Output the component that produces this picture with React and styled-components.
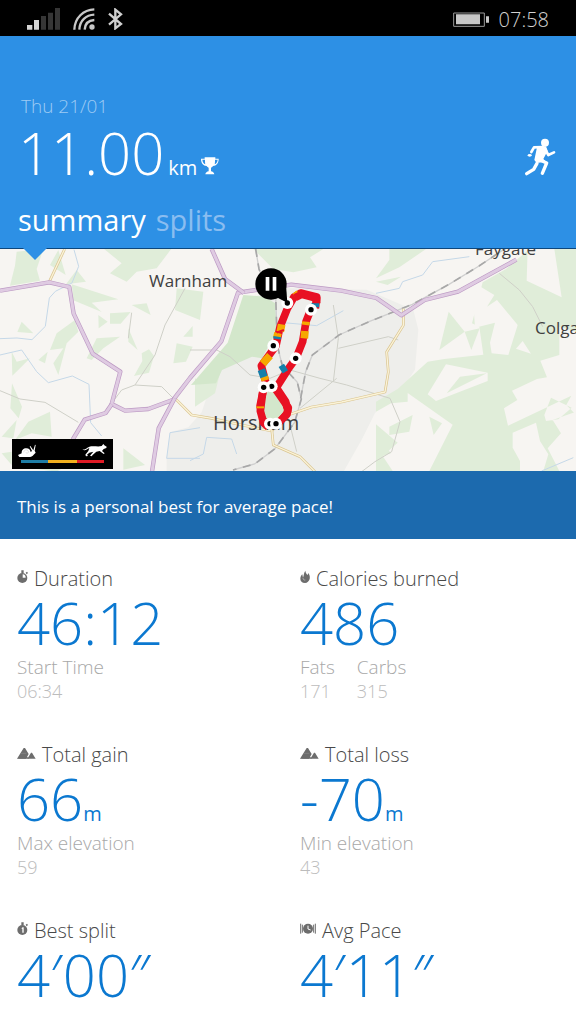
import React, { useState } from "react";
import styled, { createGlobalStyle } from "styled-components";

const GlobalStyle = createGlobalStyle`
  * { box-sizing: border-box; }
  body {
    margin: 0;
    background: #fff;
    font-family: "Open Sans", "Noto Sans", sans-serif;
    font-weight: 300;
  }
  button { font: inherit; border: 0; padding: 0; background: none; cursor: pointer; }
`;

const Page = styled.div`
  min-height: 100vh;
  background: #fff;
`;

const StatusBar = styled.div`
  display: flex;
  align-items: center;
  justify-content: space-between;
  height: 36px;
  padding: 2px 27px 0;
  background: #000;
  color: #d2d2d2;
  font-size: 20px;
`;

const StatusGroup = styled.div`
  display: flex;
  align-items: center;
  gap: ${(p) => p.$gap}px;
`;

const Icon = styled.svg`
  display: block;
  flex: none;
`;

const Header = styled.header`
  position: relative;
  display: flex;
  flex-direction: column;
  height: 213px;
  padding: 56px 20px 0 18px;
  background: #2d90e5;
  border-bottom: 1px solid #0d477d;
  color: #fff;
`;

const DateText = styled.div`
  padding-left: 3px;
  font-size: 19px;
  line-height: 28px;
  color: #9dcbf4;
`;

const DistanceRow = styled.div`
  display: flex;
  align-items: center;
  justify-content: space-between;
  height: 74px;
`;

const Distance = styled.h1`
  display: flex;
  align-items: baseline;
  margin: 0;
  padding-bottom: 8px;
  font-size: 58px;
  font-weight: 300;
  line-height: 72px;
`;

const DistanceUnit = styled.span`
  margin: 0 4px;
  font-size: 20px;
  font-weight: 400;
  line-height: 24px;
`;

const Tabs = styled.nav`
  display: flex;
  gap: 10px;
  margin-top: 6px;
`;

const Tab = styled.button`
  font-size: 29px;
  font-weight: 400;
  line-height: 40px;
  color: ${(p) => (p.$active ? "#fff" : "#8abdf0")};
`;

const Pointer = styled.div`
  position: absolute;
  left: 22px;
  top: 211px;
  z-index: 1;
  border: 13px solid transparent;
  border-top-color: #2d90e5;
  border-bottom-width: 0;
`;

const MapArea = styled.section`
  position: relative;
  height: 222px;
  overflow: hidden;
  background: #f7f5f2;
`;

const MapDrawing = styled.svg`
  display: block;
  width: 100%;
  height: 100%;
`;

const MapLabel = styled.text`
  font-family: "Open Sans", "Noto Sans", sans-serif;
  font-size: ${(p) => p.$size}px;
  font-weight: 400;
  fill: #404040;
`;

const Legend = styled.div`
  position: absolute;
  left: 12px;
  bottom: 2px;
  display: flex;
  flex-direction: column;
  gap: 3px;
  width: 101px;
  height: 30px;
  padding: 4px 5px 0 6px;
  background: #000;
`;

const LegendIcons = styled.div`
  display: flex;
  justify-content: space-between;
`;

const LegendScale = styled.div`
  height: 3px;
  margin: 0 4px 0 3px;
  background: linear-gradient(90deg, #1f7ea6 33%, #f2b01e 33% 67%, #e01b25 67%);
`;

const Banner = styled.p`
  margin: 0;
  padding: 24px 17px 20px;
  background: #1c6aae;
  color: #fff;
  font-size: 17px;
  font-weight: 400;
  line-height: 24px;
`;

const Stats = styled.main`
  display: grid;
  grid-template-columns: 1fr 1fr;
  gap: 40px 24px;
  padding: 28px 17px 16px;
`;

const Stat = styled.section`
  min-width: 0;
`;

const StatTitle = styled.h2`
  display: flex;
  align-items: center;
  gap: 6px;
  margin: 0;
  font-size: 20px;
  font-weight: 300;
  line-height: 24px;
  color: #484848;

  svg { margin-bottom: 4px; }
`;

const StatValue = styled.div`
  font-size: 58px;
  line-height: 64px;
  color: #0b78d0;
`;

const StatUnit = styled.span`
  font-size: 20px;
  font-weight: 400;
  line-height: 24px;
`;

const Details = styled.dl`
  display: flex;
  gap: 22px;
  margin: 0;
  font-size: 19px;
  line-height: 24px;
`;

const DetailLabel = styled.dt`
  color: #a8a8a8;
`;

const DetailValue = styled.dd`
  margin: 0;
  font-size: 18px;
  color: #bcbcbc;
`;

const SignalIcon = () => (
  <Icon width="34" height="22" viewBox="81 24 102 66" aria-hidden="true">
    <path fill="#d6d6d6" d="M81 75h16v14H81zM102 60h15v29h-15z" />
    <path fill="#363636" d="M123 48h15v41h-15zM144 38h15v51h-15zM165 24h15v65h-15z" />
  </Icon>
);

const WifiIcon = () => (
  <Icon width="22" height="22" viewBox="218 25 66 66" aria-hidden="true">
    <g fill="none" stroke="#c8c8c8" strokeWidth="7">
      <path d="M222 90C223 55 249 30 282 29" />
      <path d="M237 90C238 63 257 46 282 45" />
      <path d="M253 90C254 72 265 62 282 61" />
    </g>
    <circle cx="275" cy="82" r="8" fill="#c8c8c8" />
  </Icon>
);

const BluetoothIcon = () => (
  <Icon width="16" height="22" viewBox="318 24 48 66" aria-hidden="true">
    <path d="M324 41l36 31-17 13V29l17 14-36 31" fill="none" stroke="#d0d0d0" strokeWidth="7" />
  </Icon>
);

const BatteryIcon = () => (
  <Icon width="36" height="15" viewBox="489 38 108 45" aria-hidden="true">
    <path d="M491 41h92v40h-92z" fill="none" stroke="#999" strokeWidth="3" />
    <path d="M498 45h72v30h-72zM588 51h9v19h-9z" fill="#c8c8c8" />
  </Icon>
);

const TrophyIcon = () => (
  <Icon width="18" height="18" viewBox="554 205 54 54" role="img" aria-label="Personal best">
    <path
      fill="#fff"
      fillRule="evenodd"
      d="M565 206h32v4h10c0 14-7 21-17 22-2 3-4 4-6 5v11c5 1 9 4 10 9h-27c1-5 5-8 10-9v-11c-2-1-4-2-6-5-10-1-17-8-17-22h11zm-7 7c1 8 4 12 9 14-1-4-1-8-1-14zm38 0c0 6 0 10-1 14 5-2 8-6 9-14z"
    />
  </Icon>
);

const RunnerIcon = () => (
  <Icon width="32" height="38" viewBox="708 415 96 114" role="img" aria-label="Run">
    <g fill="none" stroke="#fff" strokeLinejoin="round" strokeLinecap="round">
      <path strokeWidth="8" d="M766 442l-28 1-8 14M771 448l10 18 17-8" />
      <path strokeWidth="10" d="M751 479l25 11-13 31M747 491l-10 18-21 13" />
      <path strokeWidth="17" d="M763 449l-10 24" />
    </g>
    <circle cx="771" cy="429" r="12" fill="#fff" />
    <ellipse cx="725" cy="467" rx="6" ry="4" fill="#fff" />
    <path fill="#fff" d="M747 443l27-3 5 13-13 25 8 8-28 4-7-9z" />
  </Icon>
);

const TimerIcon = () => (
  <Icon width="11" height="14" viewBox="0 0 33 42" aria-hidden="true">
    <circle cx="16" cy="24" r="15" fill="#6d6d6d" />
    <path d="M13 1h7v8h-7zM26 8l4-3 3 4-4 4z" fill="#6d6d6d" />
    <path d="M17 23V13a10 10 0 0 1 9 10z" fill="#fff" />
  </Icon>
);

const SplitIcon = () => (
  <Icon width="11" height="14" viewBox="0 0 33 42" aria-hidden="true">
    <circle cx="16" cy="24" r="15" fill="#6d6d6d" />
    <path d="M13 1h7v8h-7zM26 8l4-3 3 4-4 4z" fill="#6d6d6d" />
    <path d="M13 19l4-3h3v16h-4V21z" fill="#fff" />
  </Icon>
);

const FlameIcon = () => (
  <Icon width="10" height="14" viewBox="0 0 30 42" aria-hidden="true">
    <path
      fill="#6d6d6d"
      d="M16 2c1 7 3 9 7 13l2-6c5 7 5 13 4 18-2 7-7 12-14 12C6 39 1 33 1 26c0-6 3-10 6-13l2 10c3-7 2-14 7-21z"
    />
    <path d="M9 24c0 5 4 7 7 6" fill="none" stroke="#fff" strokeWidth="2" opacity=".6" />
  </Icon>
);

const MountainIcon = () => (
  <Icon width="19" height="13" viewBox="0 0 57 39" aria-hidden="true">
    <path fill="#6d6d6d" d="M0 35L20 3h4l11 18-8 14zM31 35l11-18h3l11 18z" />
    <path fill="#6d6d6d" d="M0 35h36l-8-8z" />
    <path d="M11 19h17" stroke="#aaa" strokeWidth="1" />
  </Icon>
);

const PaceIcon = () => (
  <Icon width="16" height="14" viewBox="0 0 48 42" aria-hidden="true">
    <path fill="none" stroke="#6d6d6d" strokeWidth="3" d="M2 5v30M7 8v24M46 5v30M41 8v24" />
    <circle cx="24" cy="20" r="15" fill="#6d6d6d" />
    <path d="M24 11v10l8 3" fill="none" stroke="#fff" strokeWidth="3" />
  </Icon>
);

const SnailIcon = () => (
  <Icon width="19" height="14" viewBox="0 0 57 42" aria-hidden="true">
    <path
      fill="#fff"
      d="M0 36l11-5c-1-9 5-15 14-15 8 0 12 5 13 11l4-3-7-14 2-1 9 13 5-17 2 1-3 17 3 6-6 6c-3 5-8 7-16 7H4z"
    />
    <path d="M17 28c1-8 11-10 14-3 2 6-7 8-7 3" fill="none" stroke="#aaa" strokeWidth="1" />
  </Icon>
);

const CheetahIcon = () => (
  <Icon width="26" height="14" viewBox="0 0 78 42" aria-hidden="true">
    <path
      fill="#fff"
      d="M1 19c10 4 14-7 27-9 11-1 22 2 31-1l5-6 3 4 7 4-1 4-8 3-5 6 8 7-3 2-12-9-10 2-12 11-1 3-6-2 10-12-12 3-7 6 3 4-6 1-2-5 9-11 3-9c-9 5-14 10-21 4z"
    />
  </Icon>
);

const Road = ({ d, minor }) => (
  <g fill="none" strokeLinejoin="round">
    <path d={d} stroke={minor ? "#d9c48f" : "#bd9ac4"} strokeWidth={minor ? 8 : 13} />
    <path d={d} stroke={minor ? "#fbf3d8" : "#dfcbe2"} strokeWidth={minor ? 4 : 9} />
  </g>
);

const Rail = ({ d }) => (
  <g fill="none">
    <path d={d} stroke="#cfcfcf" strokeWidth="4" />
    <path d={d} stroke="#a8a8a8" strokeWidth="5" strokeDasharray="24 20" />
  </g>
);

const waypoints = [
  [292, 174], [363, 194], [250, 302], [317, 340], [245, 424], [221, 427], [240, 536], [258, 536],
];

const Marker = ({ x, y }) => (
  <g>
    <circle cx={x} cy={y} r="18" fill="#fff" />
    <circle cx={x} cy={y} r="8" fill="#000" />
  </g>
);

const RouteMap = () => (
  <MapDrawing viewBox="0 0 576 222" preserveAspectRatio="xMidYMid slice" role="img" aria-label="Route map around Horsham">
    <g transform="translate(0 -4) scale(.33333)">
      <path
        fill="#eeeeeb"
        d="M500 690V640l10-78 55-15 40-45 30-90 40-70 55-60 10-118 100-35 260 5 140 60 15 60-10 120-60 90-60 40-40 80-60 106z"
      />
      <g fill="#e0edd9">
        <path d="M50 20l80-8-20 60 10 35-90 15 15-60zM150 60l25-45 22 75zM230 75l28 35-60 8zM215 118l140 45-80 10 30 28-85-35zM310 10h205l-45 60-60 10-30 30-50-25 35-30zM530 130l80 10-10 85-75-30zM395 180l45-5 12 35zM330 205l62-4-30 35h-32zM65 230l35 35-48-4zM295 210l28 20-27 20zM170 265l55-40 10 35-35 35-25 95-15-35 30-45-40 5zM115 345l28-25-8 35zM35 320l15 30 40-10-53 52zM290 280l70-5-50 35-35 35-15-5zM385 250l28 65-28-25zM425 325l22-12 15 20-15 50-45 10 25-45zM520 355l10-60 48 10-20 45zM550 275l28-32v32zM36 415l30 70-10 35-25-30zM85 530l65-30 5 75-60-10-50 20zM5 575l45-50-10 55zM370 610l65 50-65 14z" />
        <path d="M5 625l30-5v40zM110 672l80-4-20 12z" />
        <path d="M760 12h210l-40 25 20 30-70 15-60-10zM585 400l25 15 50-30-15 60-60 40z" />
      </g>
      <g transform="translate(570 0)">
        <path fill="#d3e7cb" d="M160 150l65 5 30 20 6 80-45 85-30-5-90 40-18 40-75 5 110-127z" />
        <path fill="#d3e7cb" d="M210 445l48-8 35 65-40 35-40-20z" />
      </g>
      <g transform="translate(1128 0)">
        <path
          fill="#e0edd9"
          d="M320 112l70-40 70-60h150v666H0V470l65-38 90-82 50-8 117-13-12-84-22-10z"
        />
        <path fill="#e0edd9" d="M190 315l28-115 48 60 45-10-25 65-20-55zM0 100l40-55 0-33h110l-80 55zM0 110l75-15-40 25z" />
        <g fill="#f7f5f2">
          <path d="M455 12h80l22 145-105-50zM305 120l50 30-22 35 30-20 62 75-28 90-50-5-5-32 15-60-60 15-5-75zM440 288l25 38-45-15zM210 358l125 25v25l-155 60-25-20zM95 444l135 95-70 139H50l-30-45 45-40-65-55 0-38 45-25 50-5z" />
          <path d="M600 260l-50-15v85l-57 17 20 50-30 5-75 35 16 28-40 25 12 52 190-90-15 28 30 30zM525 458l62 30-40 35-37 5-5-18zM480 533l-70 30v45l22 40v30h70l15-50-25-40zM600 500l-70 25 25 40-40 45 35 68h50z" />
        </g>
        <path fill="#e0edd9" d="M40 545l70-35-10 50-60 10zM160 515l38 20-25 35zM212 445l40-50 80-10zM0 570l45 55-45 15z" />
      </g>

      <g fill="none" stroke="#c5d8e8" strokeWidth="3">
        <path d="M222 14l14 50-20 50-50 25-18 20-12 85-40 40-45-5-51 2M0 330l65-15 45 65 35 33 72-20 50 25 5 115 33 40M600 640h-100l10-77 90-15M570 647l40-20 10-50 75 5 15 45M1128 145l70-15 10-20 60-20 30-40 110-15M840 232l110 10 80-45M1625 678l95-40" />
      </g>
      <g fill="none" stroke="#cfd0c8" strokeWidth="3">
        <path d="M0 437l60 25 75 10 100 60M405 420l60-90 30-90 60-110M405 420l80 5 35 35M405 420l-40 15-30 40M385 280l10-77M570 315h80l40 20 60 55 60 10 60-25 90 25 80 20 130 40 30 70-25 90-50 30-60 45M1000 180l15 100-15 130M1015 310l150-35 30 10M1498 85l60 50 40 50 30 60M800 480l60 20 30 120M900 490l110-90" />
      </g>
      <g transform="translate(570 0)">
        <Rail d="M197 12l10 60 15 40 35 40 5 150 15 60 45 50 12 50-20 70-60 80-60 45-65 18" />
        <Rail d="M332 460l15-80 20-50 80-60 90-40 130-52 110-60 90-55 90-60" />
      </g>

      <Road minor d="M194 12l-46 98" />
      <Road minor d="M525 460l50 50 60 10 90 20 90 18 40-45 80-27 90-15 130-30 10-60-5-60 50-80v-50" />
      <Road minor d="M815 550l5 50 80 35 45 45" />
      <Road d="M0 137l148-25 60 14 13 80 57 120 83 54-26 97 40 20 70-5 75-28 50-65 94-110 50-146 160-24 150 18 105 22 75 52 70-46 100-25 115-63 60-33" />
      <Road d="M335 478l-18 26-63 20-36 60M524 460l-48 90-20 130M635 12l40 90 57 42" />

      <g transform="translate(570 0)" fill="none" strokeWidth="23" strokeLinejoin="round">
        <path stroke="#e81123" d="M376 190l4-34-48-12-20 12-20 35-22 55-12 56-44 60 14 52-10 30-8 40 10 38 20 14M258 536l35-38-6-28-28-42 35-55 24-33 20-50 10-60 14-35" />
        <path stroke="#f6a800" d="M275 238l-4 22M264 264l-4 16M240 332l-22 24M222 392l4 14M345 258l-2 22M348 230l-1 10M315 155l12-10M211 484l-1 6" />
        <path stroke="#1580aa" d="M214 374l8 22M272 376l16-10M376 187v-13M262 275l-1 7" />
        <path stroke="#e81123" d="M315 158l20-10 45 12v15M270 256l2 6" />
      </g>
    </g>

    <MapLabel $size={17} x="149" y="38">Warnham</MapLabel>
    <MapLabel $size={20} x="213" y="181">Horsham</MapLabel>
    <MapLabel $size={17} x="475" y="6">Faygate</MapLabel>
    <MapLabel $size={17} x="535" y="85">Colgate</MapLabel>

    <g transform="translate(190 -4) scale(.33333)">
      <path d="M218 500l8-40 20-18 20 14 16 42-22 28-30-5z" fill="#d3e7cb" />
      <path
        d="M219 435l-8 63 10 36 14 12M255 430l40 58-4 20-30 30"
        fill="none"
        stroke="#e81123"
        strokeWidth="23"
        strokeLinejoin="round"
      />
      <path d="M201 487h21" stroke="#f6a800" strokeWidth="6" />
      {waypoints.map(([x, y]) => (
        <Marker key={`${x}-${y}`} x={x} y={y} />
      ))}
      <path d="M287 105l5 68-44-22z" fill="#000" />
      <circle cx="243" cy="117" r="47" fill="#000" />
      <path d="M227 96h11v41h-11zM248 96h11v41h-11z" fill="#fff" />
    </g>
  </MapDrawing>
);

const stats = [
  { title: "Duration", icon: TimerIcon, value: "46:12", details: [["Start Time", "06:34"]] },
  { title: "Calories burned", icon: FlameIcon, value: "486", details: [["Fats", "171"], ["Carbs", "315"]] },
  { title: "Total gain", icon: MountainIcon, value: "66", unit: "m", details: [["Max elevation", "59"]] },
  { title: "Total loss", icon: MountainIcon, value: "-70", unit: "m", details: [["Min elevation", "43"]] },
  { title: "Best split", icon: SplitIcon, value: "4′00″" },
  { title: "Avg Pace", icon: PaceIcon, value: "4′11″" },
];

export default function App() {
  const [tab, setTab] = useState("summary");
  return (
    <Page>
      <GlobalStyle />
      <StatusBar>
        <StatusGroup $gap={12}>
          <SignalIcon />
          <WifiIcon />
          <BluetoothIcon />
        </StatusGroup>
        <StatusGroup $gap={10}>
          <BatteryIcon />
          <span>07:58</span>
        </StatusGroup>
      </StatusBar>
      <Header>
        <DateText>Thu 21/01</DateText>
        <DistanceRow>
          <Distance>
            11.00<DistanceUnit>km</DistanceUnit>
            <TrophyIcon />
          </Distance>
          <RunnerIcon />
        </DistanceRow>
        <Tabs>
          {["summary", "splits"].map((name) => (
            <Tab key={name} type="button" $active={tab === name} onClick={() => setTab(name)}>
              {name}
            </Tab>
          ))}
        </Tabs>
        <Pointer />
      </Header>
      <MapArea>
        <RouteMap />
        <Legend>
          <LegendIcons>
            <SnailIcon />
            <CheetahIcon />
          </LegendIcons>
          <LegendScale />
        </Legend>
      </MapArea>
      <Banner>This is a personal best for average pace!</Banner>
      <Stats>
        {stats.map(({ title, icon: StatIcon, value, unit, details }) => (
          <Stat key={title}>
            <StatTitle>
              <StatIcon />
              {title}
            </StatTitle>
            <StatValue>
              {value}
              {unit && <StatUnit>{unit}</StatUnit>}
            </StatValue>
            {details && (
              <Details>
                {details.map(([label, amount]) => (
                  <div key={label}>
                    <DetailLabel>{label}</DetailLabel>
                    <DetailValue>{amount}</DetailValue>
                  </div>
                ))}
              </Details>
            )}
          </Stat>
        ))}
      </Stats>
    </Page>
  );
}
